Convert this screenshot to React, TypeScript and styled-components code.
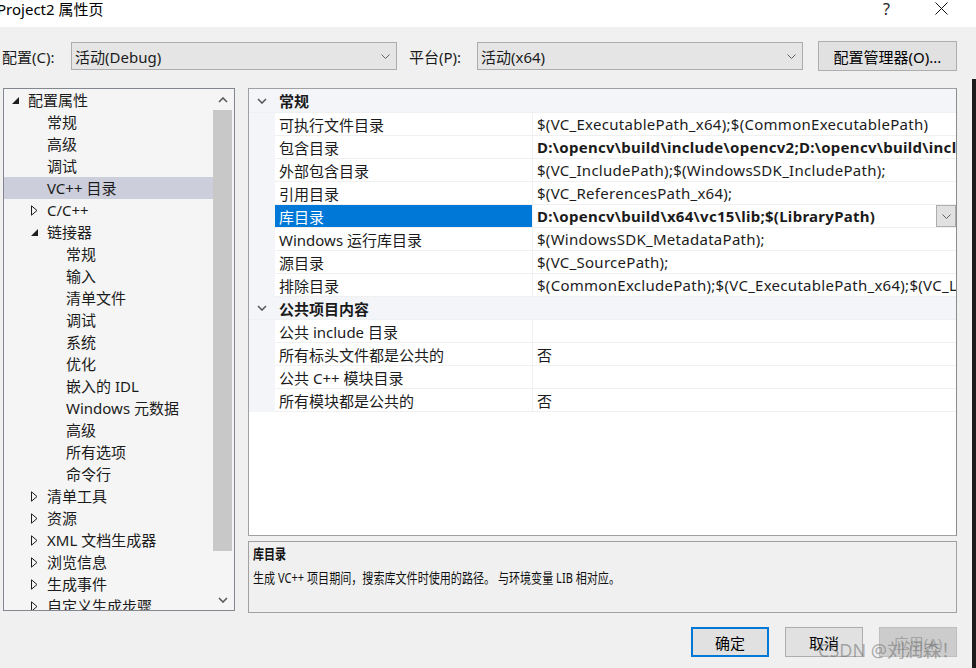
import React from 'react'
import styled, { createGlobalStyle } from 'styled-components'

const uiFont = '"Noto Sans", "Noto Sans CJK SC", sans-serif'

const GlobalStyle = createGlobalStyle`
  html, body {
    margin: 0;
    padding: 0;
    background: #f0f0f0;
    font-family: ${uiFont};
    color: #1b1b1b;
  }
  * { box-sizing: border-box; }
`

const Window = styled.div`
  width: 976px;
  height: 668px;
  position: relative;
  overflow: hidden;
  display: flex;
  flex-direction: column;
  background: #f0f0f0;
`

const TitleBar = styled.div`
  height: 27px;
  padding-bottom: 10px;
  background: #ffffff;
  display: flex;
  align-items: center;
  justify-content: space-between;
  flex-shrink: 0;
`

const Title = styled.div`
  font-size: 15px;
  line-height: 18px;
  margin-left: -3px;
  color: #000;
`

const TitleButtons = styled.div`
  display: flex;
  align-items: center;
  gap: 45px;
  padding-right: 28px;
`

const HelpMark = styled.span`
  font-size: 16px;
  line-height: 18px;
  color: #222;
`

const Body = styled.div`
  flex: 1;
  display: flex;
`

const Main = styled.div`
  flex: 1;
  display: flex;
  flex-direction: column;
  padding: 14px 15px 0 3px;
`

const EdgeStrip = styled.div`
  width: 4px;
  margin-top: 52px;
  background: #1c1c1c;
`

const ConfigRow = styled.div`
  display: flex;
  align-items: center;
  height: 30px;
`

const FieldLabel = styled.span<{ $w: number }>`
  width: ${({ $w }) => $w}px;
  font-size: 15px;
  margin-left: -1px;
`

const Combo = styled.div`
  width: 326px;
  height: 28px;
  background: #e5e5e5;
  border: 1px solid #adadad;
  display: flex;
  align-items: center;
  justify-content: space-between;
  padding: 0 6px 0 3px;
  font-size: 15px;
`

const ComboGap = styled.div`
  width: 13px;
`

const PushButton = styled.button<{ $primary?: boolean; $disabled?: boolean }>`
  width: 78px;
  height: 30px;
  font-family: ${uiFont};
  font-size: 15px;
  color: ${({ $disabled }) => ($disabled ? '#a3a3a3' : '#000')};
  background: ${({ $disabled }) => ($disabled ? '#cccccc' : '#e1e1e1')};
  border: ${({ $primary, $disabled }) =>
    $primary ? '2px solid #0078d7' : $disabled ? '1px solid #bfbfbf' : '1px solid #adadad'};
  padding: 0;
  display: flex;
  align-items: center;
  justify-content: center;
`

const ManagerButton = styled(PushButton)`
  width: 139px;
  margin-left: 15px;
`

const Panes = styled.div`
  display: flex;
  gap: 13px;
  margin-top: 17px;
`

const TreePanel = styled.div`
  width: 232px;
  height: 523px;
  background: #f5f5f5;
  border: 1px solid #828790;
  display: flex;
  overflow: hidden;
`

const TreeList = styled.div`
  flex: 1;
  overflow: hidden;
`

const TreeRow = styled.div<{ $level: number; $selected?: boolean }>`
  height: 22px;
  display: flex;
  align-items: center;
  padding-left: ${({ $level }) => 8 + $level * 19}px;
  background: ${({ $selected }) => ($selected ? '#cccedb' : 'transparent')};
  font-size: 15px;
  line-height: 20px;
  white-space: nowrap;
`

const Expander = styled.span`
  width: 16px;
  display: flex;
  align-items: center;
  flex-shrink: 0;
`

const ScrollBar = styled.div`
  width: 19px;
  margin-right: 2px;
  display: flex;
  flex-direction: column;
`

const ScrollArrow = styled.div`
  height: 21px;
  display: flex;
  align-items: center;
  justify-content: center;
`

const ScrollTrack = styled.div`
  flex: 1;
  display: flex;
  flex-direction: column;
`

const ScrollThumb = styled.div`
  height: 441px;
  background: #c8c8c8;
`

const RightColumn = styled.div`
  flex: 1;
  display: flex;
  flex-direction: column;
  gap: 5px;
`

const Grid = styled.div`
  height: 448px;
  background: #ffffff;
  border: 1px solid #a0a0a0;
  border-right-color: #8c8c8c;
  overflow: hidden;
`

const SectionHeader = styled.div<{ $h: number }>`
  height: ${({ $h }) => $h}px;
  background: #f3f5f9;
  display: flex;
  align-items: center;
  font-size: 15px;
  font-weight: 700;
  border-bottom: 1px solid #eef0f4;
`

const SectionToggle = styled.span`
  width: 30px;
  display: flex;
  justify-content: center;
  padding-right: 4px;
`

const PropRow = styled.div`
  height: 23px;
  display: grid;
  grid-template-columns: 26px 258px 1fr;
  font-size: 15px;
`

const Gutter = styled.div`
  background: #f3f5f9;
`

const NameCell = styled.div<{ $selected?: boolean }>`
  padding-left: 4px;
  display: flex;
  align-items: center;
  white-space: nowrap;
  border-bottom: 1px solid #f0f0f0;
  border-right: 1px solid #f0f0f0;
  background: ${({ $selected }) => ($selected ? '#0078d7' : '#ffffff')};
  color: ${({ $selected }) => ($selected ? '#ffffff' : '#1b1b1b')};
`

const ValueCell = styled.div<{ $bold?: boolean }>`
  padding-left: 4px;
  display: flex;
  align-items: center;
  justify-content: space-between;
  white-space: nowrap;
  overflow: hidden;
  letter-spacing: 0.28px;
  border-bottom: 1px solid #f0f0f0;
  font-weight: ${({ $bold }) => ($bold ? 700 : 400)};
`

const ValueText = styled.span`
  overflow: hidden;
`

const DropButton = styled.span`
  width: 20px;
  height: 22px;
  flex-shrink: 0;
  background: #e1e1e1;
  border: 1px solid #adadad;
  display: flex;
  align-items: center;
  justify-content: center;
`

const Description = styled.div`
  height: 72px;
  border: 1px solid #a0a0a0;
  background: #f0f0f0;
  padding: 2px 4px;
  font-size: 14px;
  display: flex;
  flex-direction: column;
  gap: 5px;
`

const DescLine = styled.div<{ $bold?: boolean }>`
  font-weight: ${({ $bold }) => ($bold ? 700 : 400)};
  transform: scaleX(0.79);
  transform-origin: left center;
  white-space: nowrap;
  line-height: 19px;
  color: #111;
`

const ButtonRow = styled.div`
  display: flex;
  justify-content: flex-end;
  gap: 16px;
  margin-top: 14px;
`

const Watermark = styled.div`
  position: absolute;
  left: 818px;
  top: 636px;
  font-size: 18px;
  color: rgba(110, 110, 110, 0.55);
  white-space: nowrap;
  pointer-events: none;
`

const ThinChevron = ({ up = false, color = '#606060' }: { up?: boolean; color?: string }) => (
  <svg width="9" height="5" viewBox="0 0 9 5">
    <path d={up ? 'M0.5 4.5 L4.5 0.5 L8.5 4.5' : 'M0.5 0.5 L4.5 4.5 L8.5 0.5'} stroke={color} strokeWidth="1" fill="none" />
  </svg>
)

const BoldChevron = ({ up = false }: { up?: boolean }) => (
  <svg width="10" height="6" viewBox="0 0 10 6">
    <path d={up ? 'M1 5 L5 1 L9 5' : 'M1 1 L5 5 L9 1'} stroke="#5a5a5a" strokeWidth="1.6" fill="none" />
  </svg>
)

const OpenTriangle = () => (
  <svg width="7" height="7" viewBox="0 0 7 7">
    <path d="M7 0 L7 7 L0 7Z" fill="#1e1e1e" />
  </svg>
)

const ClosedTriangle = () => (
  <svg width="7" height="11" viewBox="0 0 7 11">
    <path d="M0.5 0.8 L6 5.5 L0.5 10.2Z" fill="none" stroke="#1e1e1e" strokeWidth="1" />
  </svg>
)

const CloseIcon = () => (
  <svg width="13" height="13" viewBox="0 0 13 13">
    <path d="M0.5 0.5 L12.5 12.5 M12.5 0.5 L0.5 12.5" stroke="#111" strokeWidth="1" />
  </svg>
)

type TreeItem = { label: string; level: number; exp?: 'open' | 'closed'; selected?: boolean }

const treeItems: TreeItem[] = [
  { label: '配置属性', level: 0, exp: 'open' },
  { label: '常规', level: 1 },
  { label: '高级', level: 1 },
  { label: '调试', level: 1 },
  { label: 'VC++ 目录', level: 1, selected: true },
  { label: 'C/C++', level: 1, exp: 'closed' },
  { label: '链接器', level: 1, exp: 'open' },
  { label: '常规', level: 2 },
  { label: '输入', level: 2 },
  { label: '清单文件', level: 2 },
  { label: '调试', level: 2 },
  { label: '系统', level: 2 },
  { label: '优化', level: 2 },
  { label: '嵌入的 IDL', level: 2 },
  { label: 'Windows 元数据', level: 2 },
  { label: '高级', level: 2 },
  { label: '所有选项', level: 2 },
  { label: '命令行', level: 2 },
  { label: '清单工具', level: 1, exp: 'closed' },
  { label: '资源', level: 1, exp: 'closed' },
  { label: 'XML 文档生成器', level: 1, exp: 'closed' },
  { label: '浏览信息', level: 1, exp: 'closed' },
  { label: '生成事件', level: 1, exp: 'closed' },
  { label: '自定义生成步骤', level: 1, exp: 'closed' },
]

type Prop = { name: string; value: string; bold?: boolean; selected?: boolean }

const general: Prop[] = [
  { name: '可执行文件目录', value: '$(VC_ExecutablePath_x64);$(CommonExecutablePath)' },
  { name: '包含目录', value: 'D:\\opencv\\build\\include\\opencv2;D:\\opencv\\build\\include', bold: true },
  { name: '外部包含目录', value: '$(VC_IncludePath);$(WindowsSDK_IncludePath);' },
  { name: '引用目录', value: '$(VC_ReferencesPath_x64);' },
  { name: '库目录', value: 'D:\\opencv\\build\\x64\\vc15\\lib;$(LibraryPath)', bold: true, selected: true },
  { name: 'Windows 运行库目录', value: '$(WindowsSDK_MetadataPath);' },
  { name: '源目录', value: '$(VC_SourcePath);' },
  { name: '排除目录', value: '$(CommonExcludePath);$(VC_ExecutablePath_x64);$(VC_LibraryPath_x64)' },
]

const publicItems: Prop[] = [
  { name: '公共 include 目录', value: '' },
  { name: '所有标头文件都是公共的', value: '否' },
  { name: '公共 C++ 模块目录', value: '' },
  { name: '所有模块都是公共的', value: '否' },
]

const PropRows = ({ rows }: { rows: Prop[] }) => (
  <>
    {rows.map((r) => (
      <PropRow key={r.name}>
        <Gutter />
        <NameCell $selected={r.selected}>{r.name}</NameCell>
        <ValueCell $bold={r.bold}>
          <ValueText>{r.value}</ValueText>
          {r.selected && (
            <DropButton>
              <ThinChevron />
            </DropButton>
          )}
        </ValueCell>
      </PropRow>
    ))}
  </>
)

const App: React.FC = () => {
  return (
    <Window>
      <GlobalStyle />
      <TitleBar>
        <Title>Project2 属性页</Title>
        <TitleButtons>
          <HelpMark>?</HelpMark>
          <CloseIcon />
        </TitleButtons>
      </TitleBar>
      <Body>
        <Main>
          <ConfigRow>
            <FieldLabel $w={69}>配置(C):</FieldLabel>
            <Combo>
              <span>活动(Debug)</span>
              <ThinChevron />
            </Combo>
            <ComboGap />
            <FieldLabel $w={68}>平台(P):</FieldLabel>
            <Combo>
              <span>活动(x64)</span>
              <ThinChevron />
            </Combo>
            <ManagerButton>配置管理器(O)...</ManagerButton>
          </ConfigRow>

          <Panes>
            <TreePanel>
              <TreeList>
                {treeItems.map((t, i) => (
                  <TreeRow key={i} $level={t.level} $selected={t.selected}>
                    <Expander>
                      {t.exp === 'open' && <OpenTriangle />}
                      {t.exp === 'closed' && <ClosedTriangle />}
                    </Expander>
                    {t.label}
                  </TreeRow>
                ))}
              </TreeList>
              <ScrollBar>
                <ScrollArrow>
                  <BoldChevron up />
                </ScrollArrow>
                <ScrollTrack>
                  <ScrollThumb />
                </ScrollTrack>
                <ScrollArrow>
                  <BoldChevron />
                </ScrollArrow>
              </ScrollBar>
            </TreePanel>

            <RightColumn>
              <Grid>
                <SectionHeader $h={24}>
                  <SectionToggle>
                    <BoldChevron />
                  </SectionToggle>
                  常规
                </SectionHeader>
                <PropRows rows={general} />
                <SectionHeader $h={23}>
                  <SectionToggle>
                    <BoldChevron />
                  </SectionToggle>
                  公共项目内容
                </SectionHeader>
                <PropRows rows={publicItems} />
              </Grid>
              <Description>
                <DescLine $bold>库目录</DescLine>
                <DescLine>生成 VC++ 项目期间，搜索库文件时使用的路径。 与环境变量 LIB 相对应。</DescLine>
              </Description>
            </RightColumn>
          </Panes>

          <ButtonRow>
            <PushButton $primary>确定</PushButton>
            <PushButton>取消</PushButton>
            <PushButton $disabled>应用(A)</PushButton>
          </ButtonRow>
        </Main>
        <EdgeStrip />
      </Body>
      <Watermark>CSDN @刘润森！</Watermark>
    </Window>
  )
}

export default App
